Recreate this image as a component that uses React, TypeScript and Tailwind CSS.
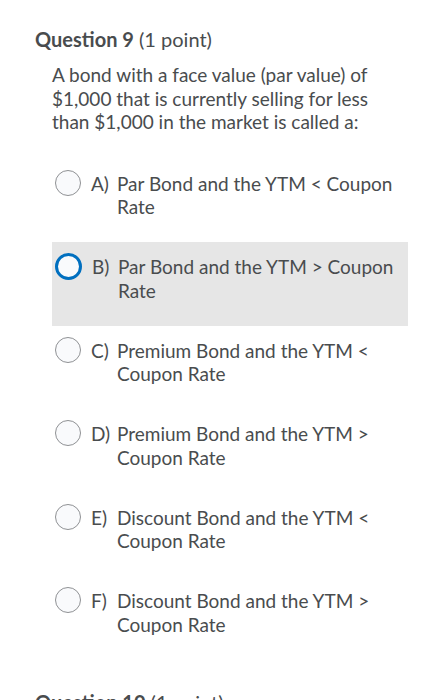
import * as React from 'react';

const options = [
  { label: 'A)', text: 'Par Bond and the YTM < Coupon Rate' },
  { label: 'B)', text: 'Par Bond and the YTM > Coupon Rate' },
  { label: 'C)', text: 'Premium Bond and the YTM < Coupon Rate' },
  { label: 'D)', text: 'Premium Bond and the YTM > Coupon Rate' },
  { label: 'E)', text: 'Discount Bond and the YTM < Coupon Rate' },
  { label: 'F)', text: 'Discount Bond and the YTM > Coupon Rate' },
];

function QuestionTitle({ n }: { n: number }) {
  return (
    <h2 className="text-[20px] leading-[24px] text-[#494c4e]">
      <span className="font-bold">Question {n}</span> (1 point)
    </h2>
  );
}

export default function App() {
  const focused = 1;

  return (
    <div
      className="min-h-[700px] w-[437px] overflow-hidden bg-white text-[#494c4e]"
      style={{ fontFamily: 'Lato, "Noto Sans", sans-serif' }}
    >
      <div className="pl-[35px] pt-[27px]">
        <QuestionTitle n={9} />

        <div className="ml-[17px] mr-[29px]">
          <p className="mt-[12px] text-[19px] leading-[23.5px]">
            A bond with a face value (par value) of $1,000 that is currently
            selling for less than $1,000 in the market is called a:
          </p>

          <div className="mt-[25px] flex flex-col">
            {options.map((opt, i) => {
              const isFocused = i === focused;
              return (
                <label
                  key={opt.label}
                  className={
                    'flex h-[83.5px] items-start pl-[3px] pr-2 pt-[13px] ' +
                    (isFocused ? 'bg-[#e6e6e6]' : '')
                  }
                >
                  <span
                    className={
                      'mt-[-2px] shrink-0 rounded-full bg-[#f9fafc] ' +
                      (isFocused
                        ? 'h-[27px] w-[27px] border-[3px] border-[#006fbf]'
                        : 'h-[26px] w-[26px] border border-[#8f9194]')
                    }
                  />
                  <span className="ml-[10px] w-[26px] shrink-0 text-[19px] leading-[23.5px]">
                    {opt.label}
                  </span>
                  <span className="text-[19px] leading-[23.5px]">{opt.text}</span>
                </label>
              );
            })}
          </div>
        </div>

        <div className="mt-[30px]">
          <QuestionTitle n={10} />
        </div>
      </div>
    </div>
  );
}
